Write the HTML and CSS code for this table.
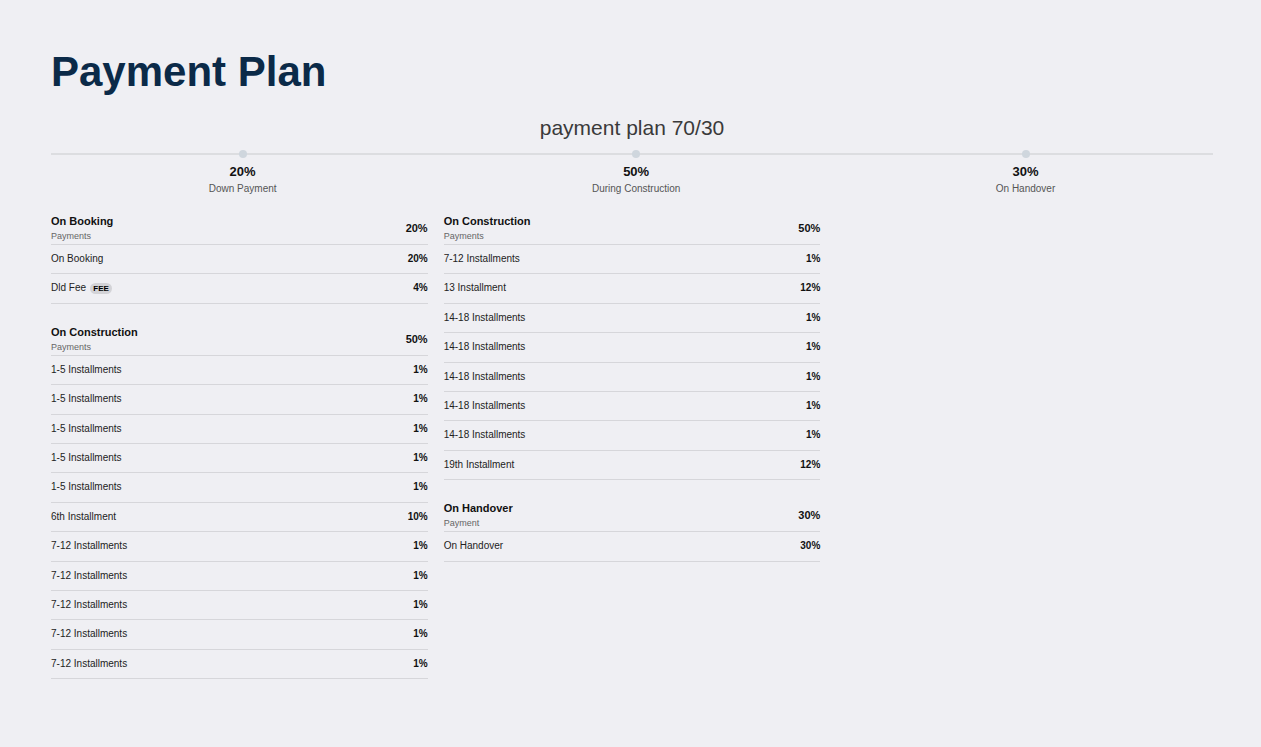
FILE: index.html
```html
<!DOCTYPE html>
<html lang="en">
<head>
<meta charset="utf-8">
<title>Payment Plan</title>
<link rel="stylesheet" href="styles.css">
</head>
<body>
<main class="page">
  <h1 class="title">Payment Plan</h1>
  <h2 class="plan-name">payment plan 70/30</h2>
  <div class="timeline">
    <div class="milestone"><span class="dot"></span><div class="ms-pct">20%</div><div class="ms-label">Down Payment</div></div>
    <div class="milestone"><span class="dot"></span><div class="ms-pct">50%</div><div class="ms-label">During Construction</div></div>
    <div class="milestone"><span class="dot"></span><div class="ms-pct">30%</div><div class="ms-label">On Handover</div></div>
  </div>
  <div class="columns">
    <div class="column">
      <section class="group">
        <div class="group-head">
          <div><div class="group-title">On Booking</div><div class="group-sub">Payments</div></div>
          <div class="group-pct">20%</div>
        </div>
        <div class="row"><span>On Booking</span><b>20%</b></div>
        <div class="row"><span>Dld Fee <span class="badge">FEE</span></span><b>4%</b></div>
      </section>
      <section class="group">
        <div class="group-head">
          <div><div class="group-title">On Construction</div><div class="group-sub">Payments</div></div>
          <div class="group-pct">50%</div>
        </div>
        <div class="row"><span>1-5 Installments</span><b>1%</b></div>
        <div class="row"><span>1-5 Installments</span><b>1%</b></div>
        <div class="row"><span>1-5 Installments</span><b>1%</b></div>
        <div class="row"><span>1-5 Installments</span><b>1%</b></div>
        <div class="row"><span>1-5 Installments</span><b>1%</b></div>
        <div class="row"><span>6th Installment</span><b>10%</b></div>
        <div class="row"><span>7-12 Installments</span><b>1%</b></div>
        <div class="row"><span>7-12 Installments</span><b>1%</b></div>
        <div class="row"><span>7-12 Installments</span><b>1%</b></div>
        <div class="row"><span>7-12 Installments</span><b>1%</b></div>
        <div class="row"><span>7-12 Installments</span><b>1%</b></div>
      </section>
    </div>
    <div class="column">
      <section class="group">
        <div class="group-head">
          <div><div class="group-title">On Construction</div><div class="group-sub">Payments</div></div>
          <div class="group-pct">50%</div>
        </div>
        <div class="row"><span>7-12 Installments</span><b>1%</b></div>
        <div class="row"><span>13 Installment</span><b>12%</b></div>
        <div class="row"><span>14-18 Installments</span><b>1%</b></div>
        <div class="row"><span>14-18 Installments</span><b>1%</b></div>
        <div class="row"><span>14-18 Installments</span><b>1%</b></div>
        <div class="row"><span>14-18 Installments</span><b>1%</b></div>
        <div class="row"><span>14-18 Installments</span><b>1%</b></div>
        <div class="row"><span>19th Installment</span><b>12%</b></div>
      </section>
      <section class="group">
        <div class="group-head">
          <div><div class="group-title">On Handover</div><div class="group-sub">Payment</div></div>
          <div class="group-pct">30%</div>
        </div>
        <div class="row"><span>On Handover</span><b>30%</b></div>
      </section>
    </div>
    <div class="column"></div>
  </div>
</main>
</body>
</html>
```

FILE: styles.css
```css
html, body {
  margin: 0;
  padding: 0;
  background: #efeff3;
  font-family: "Liberation Sans", Arial, sans-serif;
  color: #222;
}

.page {
  padding: 48px 48px 40px 51px;
}

.title {
  margin: 0;
  font-size: 42px;
  line-height: 48px;
  font-weight: 700;
  color: #0b2a48;
}

.plan-name {
  margin: 20px 0 0;
  text-align: center;
  font-size: 21px;
  line-height: 24px;
  font-weight: 400;
  color: #3a3a3a;
}

.timeline {
  position: relative;
  margin-top: 10px;
  display: flex;
  justify-content: space-around;
}

.timeline::before {
  content: "";
  position: absolute;
  left: 0;
  right: 0;
  top: 3px;
  height: 2px;
  background: #dcdde0;
}

.milestone {
  position: relative;
  display: flex;
  flex-direction: column;
  align-items: center;
}

.dot {
  width: 8px;
  height: 8px;
  border-radius: 50%;
  background: #cfd6dd;
}

.ms-pct {
  margin-top: 6px;
  font-size: 13px;
  line-height: 16px;
  font-weight: 700;
  color: #111;
}

.ms-label {
  margin-top: 3px;
  font-size: 10px;
  line-height: 12px;
  color: #555;
}

.columns {
  margin-top: 19px;
  display: grid;
  grid-template-columns: repeat(3, 1fr);
  gap: 16px;
  align-items: start;
}

.column {
  display: flex;
  flex-direction: column;
  gap: 21px;
}

.group-head {
  display: flex;
  justify-content: space-between;
  align-items: center;
  padding-bottom: 2px;
  border-bottom: 1px solid #d6d6da;
}

.group-title {
  font-size: 11px;
  line-height: 14px;
  font-weight: 700;
  color: #111;
}

.group-sub {
  margin-top: 2px;
  font-size: 9px;
  line-height: 12px;
  color: #666;
}

.group-pct {
  font-size: 11px;
  font-weight: 700;
  color: #111;
}

.row {
  display: flex;
  justify-content: space-between;
  align-items: center;
  padding: 8px 0;
  font-size: 10px;
  line-height: 12.4px;
  border-bottom: 1px solid #d6d6da;
  color: #222;
}

.row b {
  font-weight: 700;
  color: #111;
}

.badge {
  display: inline-block;
  margin-left: 1px;
  padding: 0 3.5px;
  border-radius: 6px;
  background: #d3d3d7;
  font-size: 8px;
  line-height: 11px;
  font-weight: 700;
  color: #000;
  vertical-align: 0;
}
```
